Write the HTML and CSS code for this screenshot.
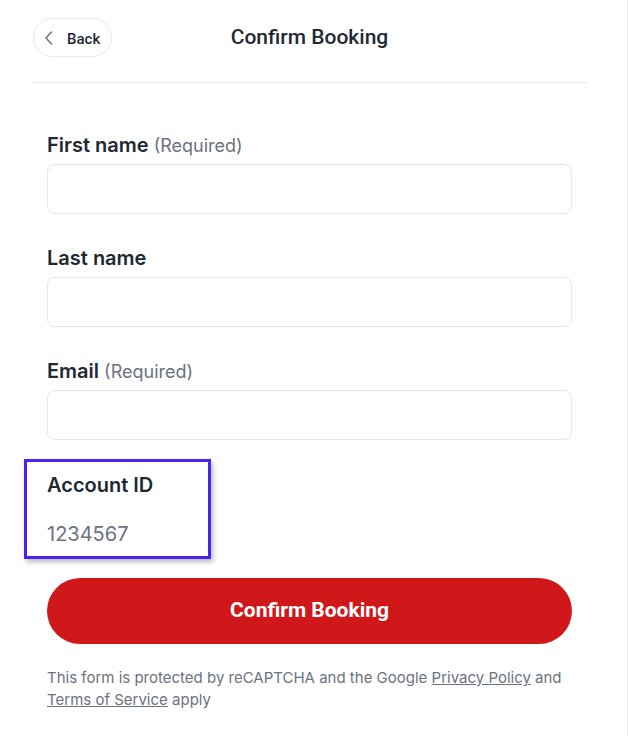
FILE: index.html
```html
<!DOCTYPE html>
<html lang="en">
<head>
<meta charset="utf-8">
<title>Confirm Booking</title>
<link rel="stylesheet" href="styles.css">
</head>
<body>
<div class="panel">
  <header class="header">
    <button class="back-btn" type="button">
      <svg class="chev" width="8" height="14" viewBox="0 0 8 14" aria-hidden="true"><path d="M6.5 1 L1 7 L6.5 13" fill="none" stroke="#6b7280" stroke-width="1.5" stroke-linecap="round" stroke-linejoin="round"/></svg>
      <span>Back</span>
    </button>
    <h1 class="title">Confirm Booking</h1>
  </header>
  <form class="form">
    <div class="field">
      <label class="label">First name <span class="hint">(Required)</span></label>
      <div class="input"></div>
    </div>
    <div class="field">
      <label class="label">Last name</label>
      <div class="input"></div>
    </div>
    <div class="field">
      <label class="label">Email <span class="hint">(Required)</span></label>
      <div class="input"></div>
    </div>
    <div class="account">
      <div class="label">Account ID</div>
      <div class="account-value">1234567</div>
    </div>
    <button class="submit" type="button">Confirm Booking</button>
    <p class="legal">This form is protected by reCAPTCHA and the Google <a href="#">Privacy Policy</a> and <a href="#">Terms of Service</a> apply</p>
  </form>
</div>
</body>
</html>
```
FILE: styles.css
```css
* { box-sizing: border-box; }
html, body { margin: 0; padding: 0; background: #fff; }
body { font-family: Inter, "Noto Sans", sans-serif; color: #1f2933; }
.panel {
  width: 628px;
  min-height: 736px;
  border-right: 1px solid #e6e8ea;
  padding: 18px 40px 0 32px;
}
.header {
  position: relative;
  display: flex;
  align-items: flex-start;
  height: 65px;
  border-bottom: 1px solid #e3e8ea;
}
.back-btn {
  display: flex;
  align-items: center;
  gap: 14px;
  height: 39px;
  width: 79px;
  padding: 0 0 0 11px;
  margin-left: 1px;
  background: #fff;
  border: 1px solid #e7e9eb;
  border-radius: 20px;
  font-family: Roboto, sans-serif;
  font-weight: 500;
  font-size: 15px;
  color: #1f2933;
}
.back-btn span { margin-top: 2px; }
.title {
  position: absolute;
  left: 0; right: 0; top: 7px;
  margin: 0;
  text-align: center;
  font-family: Roboto, sans-serif;
  font-weight: 500;
  font-size: 21px;
  line-height: 24px;
  color: #1f2933;
  pointer-events: none;
}
.form { padding: 50px 15px 0 15px; }
.field { margin-bottom: 32px; }
.field:nth-child(3) { margin-bottom: 0; }
.label {
  display: block;
  height: 24px;
  font-size: 20px;
  font-weight: 600;
  line-height: 24px;
  margin-bottom: 7px;
  color: #1f2933;
}
.hint { font-size: 18px; font-weight: 400; color: #6b7280; line-height: 1; }
.input {
  height: 50px;
  border: 1px solid #e4e8eb;
  border-radius: 8px;
}
.account {
  width: 187px;
  margin-left: -23px;
  margin-top: 19px;
  border: 3px solid #4b22f4;
  padding: 11px 20px 8px;
  box-shadow: 2px 3px 5px rgba(0,0,0,0.28);
}
.account .label { margin-bottom: 23px; }
.account-value {
  font-size: 20px;
  line-height: 28px;
  color: #6b7280;
}
.submit {
  display: block;
  width: 100%;
  height: 66px;
  margin-top: 19px;
  padding: 0 0 2px;
  border: none;
  border-radius: 33px;
  background: #d0181b;
  color: #fff;
  font-family: Roboto, sans-serif;
  font-weight: 700;
  font-size: 21px;
}
.legal {
  margin: 23px 0 0;
  font-size: 15px;
  line-height: 22px;
  color: #6b7280;
}
.legal a { color: #6b7280; text-decoration: underline; }
```
